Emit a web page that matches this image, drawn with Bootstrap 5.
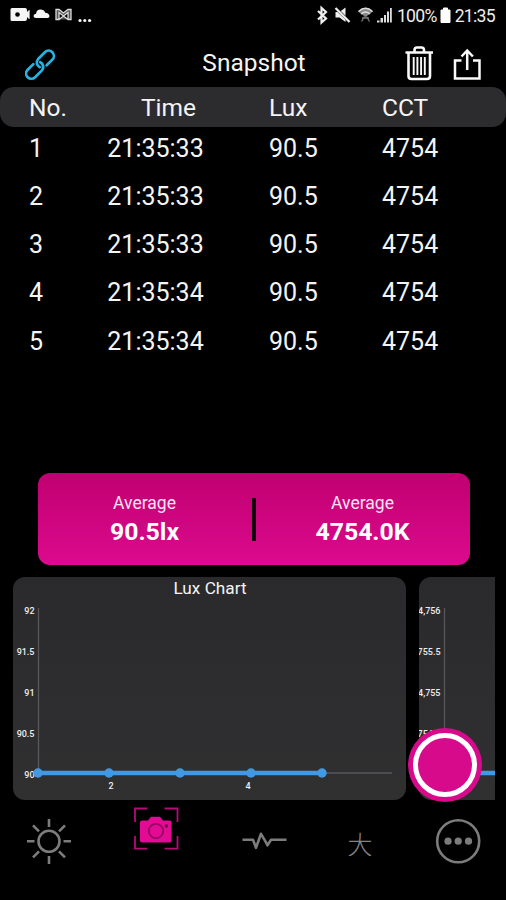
<!DOCTYPE html>
<html lang="en">
<head>
<meta charset="utf-8">
<meta name="viewport" content="width=device-width, initial-scale=1">
<title>Snapshot</title>
<link href="https://cdn.jsdelivr.net/npm/bootstrap@5.3.0/dist/css/bootstrap.min.css" rel="stylesheet">
<style>
  body { background: #000; color: #f4f4f4; font-family: Roboto, "Noto Sans CJK SC", sans-serif; overflow: hidden; }
  .screen { width: 506px; height: 900px; }
  .status { height: 32px; padding: 0 11px 0 10px; font-size: 17.6px; line-height: 32px; color: #eee; letter-spacing: -.7px; }
  .topbar { height: 55px; display: grid; grid-template-columns: 112px 1fr 112px; padding: 0 23px 0 25px; }
  .topbar h1 { font-size: 24.5px; line-height: 61px; }
  .cols { display: grid; grid-template-columns: 78px 162px 113px 1fr; padding-left: 29px; font-size: 25px; }
  .cols > .tm { width: 97px; text-align: center; }
  .thead-bar { height: 39.5px; line-height: 42px; background: #2c2c2f; border-radius: 14px; font-size: 24.5px; }
  .thead-bar .tm { width: 123px; }
  .line { height: 48.3px; line-height: 43px; }
  .rows { height: 346.5px; }
  .avg { width: 432px; height: 92px; margin-left: 37.5px; border-radius: 12px; background: linear-gradient(#c00070, #dc0a8e); color: #fff; }
  .avg .cell { width: 214px; }
  .avg .cap { font-size: 17.5px; line-height: 24px; padding-top: 18px; color: #ffe3f4; }
  .avg .val { font-size: 24.8px; line-height: 34px; font-weight: 700; }
  .avg .bar { width: 4px; height: 43px; background: #12000b; }
  .charts { height: 223px; margin: 12px 11.5px 0 13px; gap: 12.5px; }
  .chart { background: linear-gradient(#2a2a2d, #303031); border-radius: 12px; overflow: hidden; }
  .chart svg text { font-size: 9px; fill: #eee; text-anchor: end; font-weight: 500; }
  .chart svg text.ttl { font-size: 17.2px; text-anchor: middle; font-weight: 400; fill: #f4f4f4; }
  .chart svg text.mid { text-anchor: middle; }
  .shutter { position: absolute; right: 24px; top: 150.5px; width: 74px; height: 74px; border-radius: 50%; background: #d80a8c; padding: 5px; }
  .shutter span { display: block; height: 64px; border: 5px solid #fff; border-radius: 50%; }
  .tabs { height: 100px; }
</style>
<script src="https://cdn.jsdelivr.net/npm/bootstrap@5.3.0/dist/js/bootstrap.bundle.min.js"></script>
</head>
<body>
<div class="screen d-flex flex-column">
  <div class="status d-flex justify-content-between">
    <svg width="90" height="32" fill="#f5f5f5">
      <path d="M2 8h13q2 0 2 2v2l2-2h.6v9h-.6l-2-2v2q0 2-2 2H2q-1.500 0-1.500-1.500v-10Q.5 8 2 8z"/>
      <circle cx="7.500" cy="14.500" r="2.300" fill="#000"/>
      <path d="M26 18q-2.500 0-2.500-2t2.500-2.200q.5-4.300 4.500-4.300 3.500 0 4.700 3.200 3.800.3 4.300 3.300 0 2-2 2z"/>
      <path d="M46 9.500v10h3v-7l4.500 3.500 4.500-3.500v7h3v-10h-3L53.500 13 49 9.500zM49 19.500l4.500-3.500 4.500 3.500" fill="#555" stroke="#ddd" stroke-width="1.300"/>
      <circle cx="70" cy="20.500" r="1.600"/><circle cx="74.800" cy="20.500" r="1.600"/><circle cx="79.600" cy="20.500" r="1.600"/>
    </svg>
    <div class="d-flex">
      <svg width="82" height="32" fill="#eee">
        <path d="M3 11l8 7.500-4.500 4V8l4.500 4-8 7.500" fill="none" stroke="#eee" stroke-width="2.200"/>
        <path d="M20.500 12h4l6-4.500v14.500l-6-4.500h-4z"/><path d="M21 8.500L34 21" stroke="#000" stroke-width="3"/><path d="M20.500 8L34.500 22" stroke="#eee" stroke-width="2.300"/>
        <path d="M43 11.500q8-7.500 15 0L50.500 17z" fill="#888"/><path d="M43.500 11.500q7-6.500 14 0M46 14q4.500-4 9 0" fill="none" stroke="#ddd" stroke-width="1.400"/><path d="M46.500 21.500l3-5M54.500 21.500l-3-5M47 18h7" fill="none" stroke="#777" stroke-width="1.300"/>
        <path d="M62 20.500h2.500v2H62zM65.500 18H68v4.500h-2.500zM69 15h2v7.500h-2zM72 11.500h2v11h-2zM75 8h1.800v14.500H75z" fill="#ddd"/>
      </svg>
      <span>100%</span>
      <svg width="18" height="32"><path d="M4 10h2.500V8h4v2H13v12.500H4z" fill="#fff" stroke="#fff"/></svg>
      <span>21:35</span>
    </div>
  </div>

  <header class="topbar">
    <svg width="34" height="55" fill="none" stroke="#25b4e4" stroke-width="2.500" stroke-linecap="round">
      <g transform="translate(15 32.700) rotate(-45) scale(1.070)">
        <path d="M-4 -4.800H-11.500A4.900 4.900 0 0 0 -11.500 5H-2.500A4.900 4.900 0 0 0 1.800 -1.500"/>
        <path d="M4 4.800H11.500A4.900 4.900 0 0 0 11.500 -5H2.500A4.900 4.900 0 0 0 -1.800 1.500"/>
      </g>
    </svg>
    <h1 class="m-0 fw-normal text-center">Snapshot</h1>
    <svg width="112" height="55" fill="none" stroke="#fafafa" stroke-width="2.600">
      <path d="M34.500 20.500h27.500M43.500 20v-2q0-2.500 2.500-2.500h4.500q2.500 0 2.500 2.500v2M37.500 21v23q0 3 3 3h15.500q3 0 3-3V21"/>
      <path d="M42.700 25v18M46.400 25v18M50.100 25v18M53.800 25v18" stroke-width="1.900"/>
      <path d="M90.500 28.500h-6.500v18h24.500v-18h-6.500M96.200 38V18.500M90.500 24.500l5.700-6 5.700 6" stroke-width="2.500"/>
    </svg>
  </header>

  <main>
    <div class="cols thead-bar"><span>No.</span><span class="tm">Time</span><span>Lux</span><span>CCT</span></div>
    <div class="rows">
      <div class="cols line"><span>1</span><span class="tm">21:35:33</span><span>90.5</span><span>4754</span></div>
      <div class="cols line"><span>2</span><span class="tm">21:35:33</span><span>90.5</span><span>4754</span></div>
      <div class="cols line"><span>3</span><span class="tm">21:35:33</span><span>90.5</span><span>4754</span></div>
      <div class="cols line"><span>4</span><span class="tm">21:35:34</span><span>90.5</span><span>4754</span></div>
      <div class="cols line"><span>5</span><span class="tm">21:35:34</span><span>90.5</span><span>4754</span></div>
    </div>

    <section class="avg d-flex align-items-center">
      <div class="cell h-100 text-center"><div class="cap">Average</div><div class="val">90.5lx</div></div>
      <div class="bar"></div>
      <div class="cell h-100 text-center"><div class="cap">Average</div><div class="val">4754.0K</div></div>
    </section>

    <div class="position-relative">
      <section class="charts d-flex overflow-hidden">
        <div class="chart flex-shrink-0">
          <svg class="d-block" width="393" height="223">
            <text class="ttl" x="197" y="17">Lux Chart</text>
            <text x="21.500" y="36.500">92</text><text x="21.500" y="77.500">91.5</text><text x="21.500" y="119">91</text><text x="21.500" y="160">90.5</text><text x="21.500" y="201">90</text>
            <path d="M25.500 31v165M25 196h354" stroke="#58585b" stroke-width="1.300"/>
            <path d="M25 196h284" stroke="#4299e3" stroke-width="4.500"/>
            <g fill="#4299e3"><circle cx="25" cy="196" r="4.700"/><circle cx="96" cy="196" r="4.700"/><circle cx="167" cy="196" r="4.700"/><circle cx="238" cy="196" r="4.700"/><circle cx="309" cy="196" r="4.700"/></g>
            <text class="mid" x="98" y="212">2</text><text class="mid" x="235" y="212">4</text>
          </svg>
        </div>
        <div class="chart flex-shrink-0">
          <svg class="d-block" width="393" height="223">
            <text x="21.500" y="36.500">4,756</text><text x="21.500" y="77.500">755.5</text><text x="21.500" y="119">4,755</text><text x="21.500" y="160">754.5</text>
            <path d="M25.500 31v165" stroke="#58585b" stroke-width="1.300"/>
            <path d="M25 196h284" stroke="#4299e3" stroke-width="4.500"/>
          </svg>
        </div>
      </section>
      <button class="shutter border-0" aria-label="Capture"><span></span></button>
    </div>
  </main>

  <nav class="tabs">
    <svg class="d-block" width="506" height="100" fill="none" stroke="#7c7c7c">
      <g stroke-width="2.600"><circle cx="49" cy="41.300" r="10.500"/>
        <path d="M49 19v8M49 56v8M27 41.300h7.500M63.500 41.300H71M33 25.300l6 6M59 51.300l6 6M65 25.300l-6 6M39 51.300l-6 6"/></g>
      <path d="M135 22V8.500h12.500M164.500 8.500H177.500V22M177.500 36v12.700h-13M147.500 48.700H135V36" stroke="#b80a79" stroke-width="1.800"/>
      <path d="M142 20.500h6l3-3.800h9l3 3.800h6.500q2 0 2 2v18q0 2-2 2H142q-2 0-2-2v-18q0-2 2-2z" fill="#e30a94" stroke="none"/>
      <circle cx="156" cy="31" r="7.200" stroke="#960860" stroke-width="1.800"/><circle cx="166.300" cy="26" r="1.700" fill="#640541" stroke="none"/>
      <path d="M242.500 39.800h10.500l3 8 5-14 5 8.500 1.500 3 3.500-5.500H286.500" stroke-width="2.600" stroke-linejoin="round"/>
      <text x="347.500" y="53.500" font-size="25" font-weight="300" fill="#858585" stroke="none">大</text>
      <circle cx="458.200" cy="41.200" r="21" stroke-width="2.600"/>
      <g fill="#7c7c7c" stroke="none"><circle cx="448" cy="41.200" r="3.600"/><circle cx="458.200" cy="41.200" r="3.600"/><circle cx="468.500" cy="41.200" r="3.600"/></g>
    </svg>
  </nav>
</div>
</body>
</html>
